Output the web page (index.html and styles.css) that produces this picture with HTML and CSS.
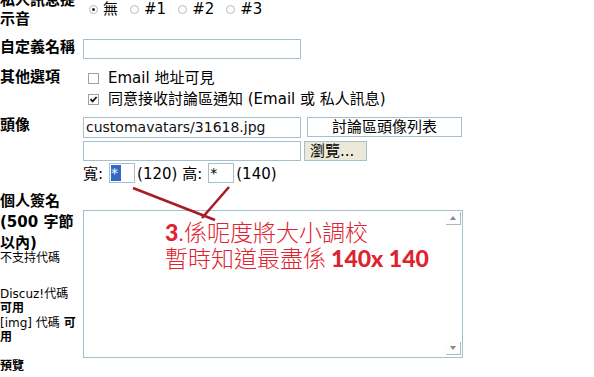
FILE: index.html
```html
<!DOCTYPE html>
<html>
<head>
  <title>個人資料</title>
  <link rel="stylesheet" href="styles.css">
</head>
<body>

<div class="page">
  <div class="form">
    <div class="row r-sound">
      <div class="lbl">私人訊息提示音</div>
      <div class="val radios">
        <span class="radio on"></span>無
        <span class="radio"></span>#1
        <span class="radio"></span>#2
        <span class="radio"></span>#3
      </div>
    </div>

    <div class="row r-title">
      <div class="lbl">自定義名稱</div>
      <div class="val"><span class="field wide"></span></div>
    </div>

    <div class="row r-opts">
      <div class="lbl">其他選項</div>
      <div class="val">
        <div class="opt"><span class="check"></span>Email 地址可見</div>
        <div class="opt"><span class="check on">
          <svg width="9" height="9" viewBox="0 0 9 9"><path d="M1.5 4.2 L3.6 6.4 L7.6 2" fill="none" stroke="#111" stroke-width="1.8"/></svg>
        </span>同意接收討論區通知 (Email 或 私人訊息)</div>
      </div>
    </div>

    <div class="row r-avatar">
      <div class="lbl">頭像</div>
      <div class="val">
        <div class="line">
          <span class="field wide mono">customavatars/31618.jpg</span>
          <span class="btn list">討論區頭像列表</span>
        </div>
        <div class="line">
          <span class="field wide file"></span>
          <span class="btn browse">瀏覽...</span>
        </div>
        <div class="size">寬:<span class="field tiny"><span class="sel">*</span></span>(120) 高:<span class="field tiny">*</span>(140)</div>
      </div>
    </div>

    <div class="row r-sig">
      <div class="lbl">
        <div>個人簽名 (500 字節 以內)</div>
        <div class="note first">不支持代碼</div>
        <div class="note second">Discuz!代碼 <b>可用</b></div>
        <div class="note third">[img] 代碼 <b>可用</b></div>
        <div class="preview">預覽</div>
      </div>
      <div class="val">
        <div class="textbox">
          <span class="arrow up"></span>
          <span class="arrow down"></span>
        </div>
      </div>
    </div>
  </div>

  <!-- annotation drawn over the screenshot -->
  <svg class="marks" width="594" height="377">
    <line x1="133" y1="188" x2="215" y2="220" stroke="#a81c28" stroke-width="2.6"/>
    <line x1="229" y1="187" x2="202" y2="218" stroke="#a81c28" stroke-width="2.6"/>
  </svg>
  <div class="note-red">
    <div><b>3</b>.係呢度將大小調校</div>
    <div>暫時知道最盡係 <b>140x 140</b></div>
  </div>
</div>

</body>
</html>
```

FILE: styles.css
```css
body {
  margin: 0;
  padding: 0;
  background: #fff;
  color: #000;
  font-family: "DejaVu Sans", "Noto Sans CJK TC", sans-serif;
  font-size: 15px;
  overflow: hidden;
}

.page {
  position: relative;
  width: 594px;
  height: 377px;
  overflow: hidden;
}

.form {
  margin-top: -9px;
}

.row {
  display: grid;
  grid-template-columns: 80px 1fr;
  column-gap: 3px;
  align-items: start;
}

.lbl {
  font-weight: bold;
  line-height: 19px;
}

/* row 1 */
.radios {
  margin-top: 9px;
  line-height: 19px;
  display: flex;
  align-items: center;
}
.radio {
  display: inline-block;
  width: 9px;
  height: 9px;
  border: 1px solid #b9b9b9;
  border-radius: 50%;
  margin: 0 5px 0 12px;
  position: relative;
  box-sizing: border-box;
}
.radio:first-child {
  margin-left: 6px;
}
.radio.on::after {
  content: "";
  position: absolute;
  left: 2px;
  top: 2px;
  width: 3px;
  height: 3px;
  border-radius: 50%;
  background: #222;
}

/* row 2 */
.r-title .lbl {
  padding-top: 9px;
}
.r-title .val {
  padding-top: 10px;
}

.field {
  display: inline-block;
  box-sizing: border-box;
  border: 1px solid #a3c0cc;
  background: #fff;
  height: 20px;
  vertical-align: top;
}
.field.wide {
  width: 218px;
}
.field.mono {
  height: 21px;
  font-size: 14px;
  line-height: 19px;
  padding-left: 2px;
  color: #111;
}

/* row 3 */
.r-opts .lbl {
  padding-top: 9px;
}
.r-opts .val {
  padding-top: 9px;
}
.opt {
  line-height: 21px;
  display: flex;
  align-items: center;
}
.check {
  display: inline-block;
  box-sizing: border-box;
  width: 11px;
  height: 11px;
  border: 1px solid #a0a0a0;
  margin: 0 9px 0 5px;
  position: relative;
}
.check svg {
  position: absolute;
  left: 0;
  top: 0;
}

/* row 4 */
.r-avatar .lbl {
  padding-top: 6px;
}
.r-avatar .val {
  padding-top: 7px;
}
.line {
  display: flex;
  align-items: flex-start;
  gap: 5px;
}
.line + .line {
  margin-top: 3px;
}
.btn {
  box-sizing: border-box;
  display: inline-block;
  border: 1px solid #a3c0cc;
  height: 20px;
  line-height: 18px;
  text-align: center;
  font-size: 15px;
}
.btn.list {
  width: 155px;
  margin-left: 1px;
  background: #fff;
}
.btn.browse {
  width: 63px;
  margin-left: -2px;
  background: #ece9d8;
  text-align: left;
  padding-left: 5px;
}
.size {
  margin-top: 2px;
  height: 20px;
  line-height: 22px;
}
.field.tiny {
  width: 26px;
  margin: 0 2px 0 6px;
  font-size: 14px;
  line-height: 18px;
  padding-left: 1px;
}
.sel {
  display: inline-block;
  vertical-align: top;
  background: #316ac5;
  color: #fff;
  width: 10px;
  height: 16px;
  margin-top: 1px;
  line-height: 17px;
}

/* row 5 */
.r-sig .lbl {
  padding-top: 8px;
  line-height: 21px;
}
.note {
  font-weight: normal;
  font-size: 12px;
  line-height: 14px;
}
.note b {
  font-weight: bold;
}
.note.first {
  margin-top: -3px;
}
.note.second {
  margin-top: 22px;
}
.note.third {
  margin-top: 1px;
}
.preview {
  margin-top: 15px;
  font-size: 12px;
  line-height: 14px;
}

.r-sig .val {
  padding-top: 27px;
}
.textbox {
  position: relative;
  box-sizing: border-box;
  width: 380px;
  height: 148px;
  border: 1px solid #a3c0cc;
  background: #fff;
}
.arrow {
  position: absolute;
  right: 1px;
  width: 15px;
  height: 13px;
  box-sizing: border-box;
  border-right: 1px solid #b5b5b5;
  border-bottom: 1px solid #b5b5b5;
  background: #fdfdfd;
}
.arrow::after {
  content: "";
  position: absolute;
  left: 4px;
  border-left: 3px solid transparent;
  border-right: 3px solid transparent;
}
.arrow.up {
  top: 1px;
}
.arrow.up::after {
  top: 4px;
  border-bottom: 4px solid #888;
}
.arrow.down {
  bottom: 2px;
}
.arrow.down::after {
  top: 4px;
  border-top: 4px solid #888;
}

/* red annotation on top */
.marks {
  position: absolute;
  left: 0;
  top: 0;
}
.note-red {
  position: absolute;
  left: 165px;
  top: 219px;
  color: #df2230;
  font-family: "Noto Sans CJK TC", sans-serif;
  font-weight: 300;
  font-size: 23px;
  line-height: 25px;
  text-shadow: 0 0 2px #fff, 0 0 2px #fff;
}
.note-red b {
  font-family: "Lato", "Noto Sans", sans-serif;
  font-weight: 900;
}
```
